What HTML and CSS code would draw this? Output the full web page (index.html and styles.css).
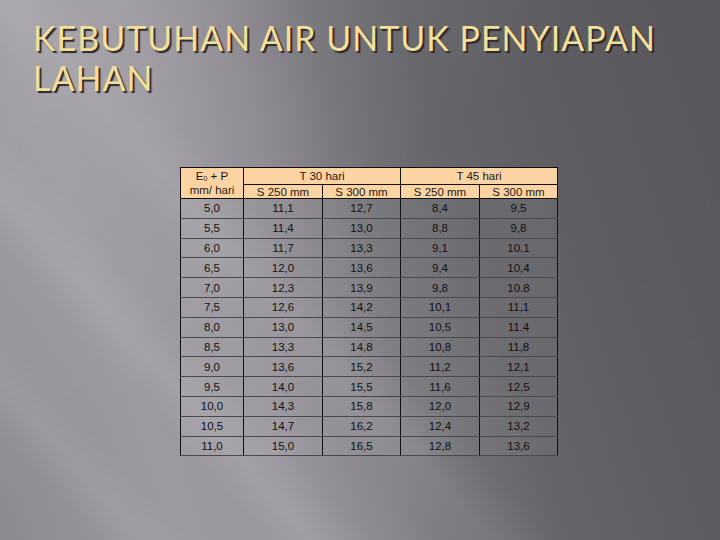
FILE: index.html
```html
<!DOCTYPE html>
<html>
<head>
<meta charset="utf-8">
<link rel="stylesheet" href="styles.css">
</head>
<body>
<div class="slide">
  <h1 class="title">KEBUTUHAN AIR UNTUK PENYIAPAN<br>LAHAN</h1>
  <table class="data">
    <colgroup>
      <col class="c1"><col class="c2"><col class="c3"><col class="c4"><col class="c5">
    </colgroup>
    <thead>
      <tr class="h1">
        <th rowspan="2" class="ep"><div class="ep-top">E<sub>0</sub> + P</div><div class="ep-bot">mm/ hari</div></th>
        <th colspan="2">T 30 hari</th>
        <th colspan="2">T 45 hari</th>
      </tr>
      <tr class="h2">
        <th>S 250 mm</th><th>S 300 mm</th><th>S 250 mm</th><th>S 300 mm</th>
      </tr>
    </thead>
    <tbody>
      <tr><td>5,0</td><td>11,1</td><td>12,7</td><td>8,4</td><td>9,5</td></tr>
      <tr><td>5,5</td><td>11,4</td><td>13,0</td><td>8,8</td><td>9,8</td></tr>
      <tr><td>6,0</td><td>11,7</td><td>13,3</td><td>9,1</td><td>10.1</td></tr>
      <tr><td>6,5</td><td>12,0</td><td>13,6</td><td>9,4</td><td>10,4</td></tr>
      <tr><td>7,0</td><td>12,3</td><td>13,9</td><td>9,8</td><td>10.8</td></tr>
      <tr><td>7,5</td><td>12,6</td><td>14,2</td><td>10,1</td><td>11,1</td></tr>
      <tr><td>8,0</td><td>13,0</td><td>14,5</td><td>10,5</td><td>11.4</td></tr>
      <tr><td>8,5</td><td>13,3</td><td>14,8</td><td>10,8</td><td>11,8</td></tr>
      <tr><td>9,0</td><td>13,6</td><td>15,2</td><td>11,2</td><td>12,1</td></tr>
      <tr><td>9,5</td><td>14,0</td><td>15,5</td><td>11,6</td><td>12,5</td></tr>
      <tr><td>10,0</td><td>14,3</td><td>15,8</td><td>12,0</td><td>12,9</td></tr>
      <tr><td>10,5</td><td>14,7</td><td>16,2</td><td>12,4</td><td>13,2</td></tr>
      <tr><td>11,0</td><td>15,0</td><td>16,5</td><td>12,8</td><td>13,6</td></tr>
    </tbody>
  </table>
</div>
</body>
</html>
```
FILE: styles.css
```css
html, body {
  margin: 0;
  padding: 0;
}
body {
  width: 720px;
  height: 540px;
  overflow: hidden;
}
.slide {
  width: 720px;
  height: 540px;
  box-sizing: border-box;
  padding: 18px 0 0 33px;
  background:
    linear-gradient(48deg, rgba(255,255,255,0) 0%, rgba(255,255,255,0) 8%, rgba(255,255,255,0.07) 12%, rgba(255,255,255,0) 16%, rgba(255,255,255,0) 22%, rgba(255,255,255,0.08) 26%, rgba(255,255,255,0) 31%, rgba(255,255,255,0) 36%, rgba(255,255,255,0.06) 41%, rgba(255,255,255,0) 46%),
    linear-gradient(140deg, rgba(255,255,255,0.10) 0%, rgba(255,255,255,0.04) 30%, rgba(255,255,255,0) 45%),
    linear-gradient(72deg, #8c8a90 0%, #9c9aa0 20%, #99979d 34%, #8a888e 44%, #737277 54%, #656469 64%, #5d5c61 80%, #57565b 100%);
}
.title {
  margin: 0;
  font-family: "Lato", "Liberation Sans", sans-serif;
  font-weight: 400;
  font-size: 34px;
  line-height: 40px;
  letter-spacing: 1px;
  color: #f3df9b;
  text-shadow: 2px 2px 1px #2a292c;
}
.data {
  margin: 69px 0 0 147px;
  border-collapse: collapse;
  table-layout: fixed;
  width: 378px;
  border: 1.5px solid #111;
  font-family: "Liberation Sans", Arial, sans-serif;
  font-size: 11.5px;
  color: #111;
  background: rgba(255,255,255,0.05);
}
.c1 { width: 63px; }
.c2 { width: 79px; }
.c3 { width: 78px; }
.c4 { width: 79px; }
.c5 { width: 78px; }
.data th {
  background: #fcd3a2;
  font-weight: 400;
  padding: 0;
  text-align: center;
  border-left: 1px solid #111;
  border-right: 1px solid #111;
  color: #1c1a18;
}
.data .h1 th { height: 16px; border-bottom: 1px solid #111; }
.data .h2 th { height: 13px; border-bottom: 1.5px solid #111; }
.data .h1 th.ep { border-bottom: 1.5px solid #111; vertical-align: top; }
.ep-top { height: 16px; line-height: 17px; }
.ep-bot { height: 13px; line-height: 13px; }
.ep sub { font-size: 7px; vertical-align: -1px; }
.data td {
  height: 18.8px;
  padding: 0;
  text-align: center;
  border-left: 1px solid #111;
  border-right: 1px solid #111;
  border-bottom: 1px solid #4a494d;
}
```
